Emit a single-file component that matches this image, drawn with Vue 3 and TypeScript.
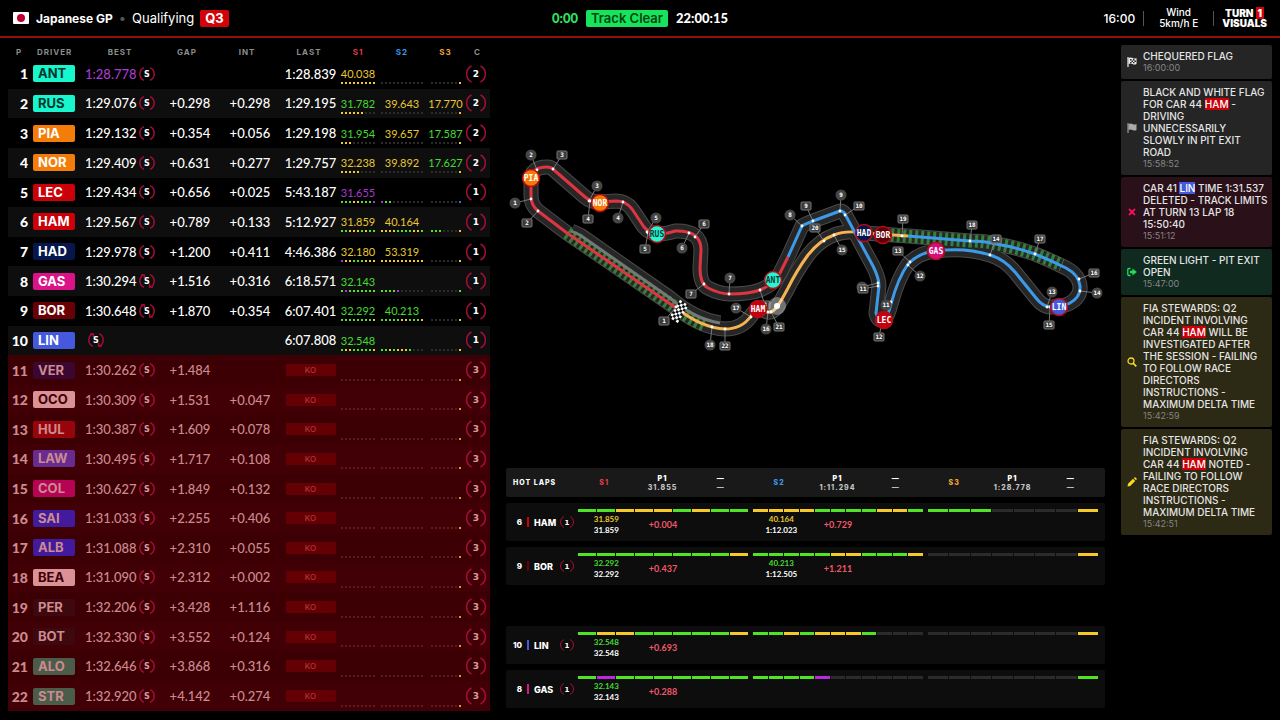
<script setup lang="ts">
type Tyre = 'new' | 'used'
interface Row {
  pos: number
  code: string
  team: string
  best: string
  tyre: Tyre
  gap: string
  int: string
  last: string
  sectors: [string, string][]
  dots: [string, string, string]
  runs: number
  out: boolean
}

const N9 = '---------'
const N11 = '-----------'
const Y3 = '-------y'

function live(pos: number, code: string, team: string, best: string, tyre: Tyre, gap: string, int: string, last: string,
  sectors: [string, string][], dots: [string, string, string], runs: number): Row {
  return { pos, code, team, best, tyre, gap, int, last, sectors, dots, runs, out: false }
}
function knocked(pos: number, code: string, team: string, best: string, gap: string, int: string): Row {
  return { pos, code, team, best, tyre: 'new', gap, int, last: '', sectors: [['', ''], ['', ''], ['', '']], dots: [N9, N11, Y3], runs: 3, out: true }
}

const none: [string, string] = ['', '']
const rows: Row[] = [
  live(1, 'ANT', 'mercedes', '1:28.778', 'new', '', '', '1:28.839', [['40.038', 'y'], none, none], ['yyyyyyyyy', N11, Y3], 2),
  live(2, 'RUS', 'mercedes', '1:29.076', 'new', '+0.298', '+0.298', '1:29.195', [['31.782', 'g'], ['39.643', 'y'], ['17.770', 'y']], ['yyyyyy---', N11, Y3], 2),
  live(3, 'PIA', 'mclaren', '1:29.132', 'new', '+0.354', '+0.056', '1:29.198', [['31.954', 'g'], ['39.657', 'y'], ['17.587', 'g']], ['yyy------', N11, Y3], 2),
  live(4, 'NOR', 'mclaren', '1:29.409', 'new', '+0.631', '+0.277', '1:29.757', [['32.238', 'y'], ['39.892', 'y'], ['17.627', 'g']], ['yyyyy----', N11, Y3], 2),
  live(5, 'LEC', 'ferrari', '1:29.434', 'new', '+0.656', '+0.025', '5:43.187', [['31.655', 'p'], none, none], ['gggyygggp', 'pgg--------', '-------b'], 1),
  live(6, 'HAM', 'ferrari', '1:29.567', 'new', '+0.789', '+0.133', '5:12.927', [['31.859', 'y'], ['40.164', 'y'], none], ['ggyyygygg', 'yyyyggggyyg', 'ggg----y'], 1),
  live(7, 'HAD', 'redbull', '1:29.978', 'new', '+1.200', '+0.411', '4:46.386', [['32.180', 'y'], ['53.319', 'y'], none], ['pyygggyyy', 'yyyyyyyyyyy', Y3], 1),
  live(8, 'GAS', 'alpine', '1:30.294', 'used', '+1.516', '+0.316', '6:18.571', [['32.143', 'g'], none, none], ['gpggggggg', 'ggggp------', '-------g'], 1),
  live(9, 'BOR', 'audi', '1:30.648', 'used', '+1.870', '+0.354', '6:07.401', [['32.292', 'g'], ['40.213', 'g'], none], ['ggggggggy', 'gggggyygggy', Y3], 1),
  live(10, 'LIN', 'racingbulls', '', 'used', '', '', '6:07.808', [['32.548', 'g'], none, none], ['gyygggggy', 'ggygyyyg---', Y3], 1),
  knocked(11, 'VER', 'redbull-ko', '1:30.262', '+1.484', ''),
  knocked(12, 'OCO', 'haas', '1:30.309', '+1.531', '+0.047'),
  knocked(13, 'HUL', 'audi-ko', '1:30.387', '+1.609', '+0.078'),
  knocked(14, 'LAW', 'rb-ko', '1:30.495', '+1.717', '+0.108'),
  knocked(15, 'COL', 'alpine-ko', '1:30.627', '+1.849', '+0.132'),
  knocked(16, 'SAI', 'williams', '1:31.033', '+2.255', '+0.406'),
  knocked(17, 'ALB', 'williams', '1:31.088', '+2.310', '+0.055'),
  knocked(18, 'BEA', 'haas', '1:31.090', '+2.312', '+0.002'),
  knocked(19, 'PER', 'cadillac', '1:32.206', '+3.428', '+1.116'),
  knocked(20, 'BOT', 'cadillac', '1:32.330', '+3.552', '+0.124'),
  knocked(21, 'ALO', 'aston', '1:32.646', '+3.868', '+0.316'),
  knocked(22, 'STR', 'aston', '1:32.920', '+4.142', '+0.274'),
]

const hotHead = [
  { name: 'S1', cls: 's1', time: '31.855' },
  { name: 'S2', cls: 's2', time: '1:11.294' },
  { name: 'S3', cls: 's3', time: '1:28.778' },
]
interface HotBlock { bars: string; time: string; tone: string; total: string; delta: string }
interface HotRow { pos: number; code: string; bar: string; blocks: HotBlock[] }
const blank = (bars: string): HotBlock => ({ bars, time: '', tone: '', total: '', delta: '' })
const hotGroups: HotRow[][] = [
  [
    { pos: 6, code: 'HAM', bar: 'ferrari', blocks: [
      { bars: 'ggyyygygg', time: '31.859', tone: 'y', total: '31.859', delta: '+0.004' },
      { bars: 'yyyyggggyyg', time: '40.164', tone: 'y', total: '1:12.023', delta: '+0.729' },
      blank('ggg----y')] },
    { pos: 9, code: 'BOR', bar: 'audi', blocks: [
      { bars: 'ggggggggy', time: '32.292', tone: 'g', total: '32.292', delta: '+0.437' },
      { bars: 'gggggyygggy', time: '40.213', tone: 'g', total: '1:12.505', delta: '+1.211' },
      blank(Y3)] },
  ],
  [
    { pos: 10, code: 'LIN', bar: 'racingbulls', blocks: [
      { bars: 'gyygggggy', time: '32.548', tone: 'g', total: '32.548', delta: '+0.693' },
      blank('ggygyyyg---'), blank(Y3)] },
    { pos: 8, code: 'GAS', bar: 'alpine', blocks: [
      { bars: 'gpggggggg', time: '32.143', tone: 'g', total: '32.143', delta: '+0.288' },
      blank('ggggp------'), blank('-------g')] },
  ],
]

interface Part { t: string; c?: string }
interface Message { kind: string; icon: string; lines: Part[][]; time: string }
const l = (t: string): Part[] => [{ t }]
const messages: Message[] = [
  { kind: 'grey', icon: 'chequered', lines: [l('CHEQUERED FLAG')], time: '16:00:00' },
  { kind: 'grey', icon: 'flag', lines: [l('BLACK AND WHITE FLAG'), [{ t: 'FOR CAR 44 ' }, { t: 'HAM', c: 'ferrari' }, { t: ' -' }], l('DRIVING'), l('UNNECESSARILY'), l('SLOWLY IN PIT EXIT'), l('ROAD')], time: '15:58:52' },
  { kind: 'crimson', icon: 'cross', lines: [[{ t: 'CAR 41 ' }, { t: 'LIN', c: 'racingbulls' }, { t: ' TIME 1:31.537' }], l('DELETED - TRACK LIMITS'), l('AT TURN 13 LAP 18'), l('15:50:40')], time: '15:51:12' },
  { kind: 'green', icon: 'exit', lines: [l('GREEN LIGHT - PIT EXIT'), l('OPEN')], time: '15:47:00' },
  { kind: 'olive', icon: 'search', lines: [l('FIA STEWARDS: Q2'), l('INCIDENT INVOLVING'), [{ t: 'CAR 44 ' }, { t: 'HAM', c: 'ferrari' }, { t: ' WILL BE' }], l('INVESTIGATED AFTER'), l('THE SESSION - FAILING'), l('TO FOLLOW RACE'), l('DIRECTORS'), l('INSTRUCTIONS -'), l('MAXIMUM DELTA TIME')], time: '15:42:59' },
  { kind: 'olive', icon: 'pencil', lines: [l('FIA STEWARDS: Q2'), l('INCIDENT INVOLVING'), [{ t: 'CAR 44 ' }, { t: 'HAM', c: 'ferrari' }, { t: ' NOTED -' }], l('FAILING TO FOLLOW'), l('RACE DIRECTORS'), l('INSTRUCTIONS -'), l('MAXIMUM DELTA TIME')], time: '15:42:51' },
]

const redLine = 'M679 310 L567 233 L538 211 Q531 205 531 196 L531 180 Q531 167 547 167 Q551 167 554 170 L585 197 Q591 202 600 202 L616 201 Q626 201 632 209 L644 227 Q649 233 657 234 Q667 234 675 231 Q701 230 701 250 L700 268 Q700 284 708 288 Q720 294 730 294 Q749 294 760 290 Q775 284 780 273 L788 257'
const blueLine = 'M788 257 L802 226 Q803 225 813 221 L840 211 Q844 211 846 216 L873 266 Q879 278 879 286 L876 313 Q878 322 884 320 Q888 316 891 304 Q898 278 908 264 Q920 252 936 251 Q965 247 990 255 Q1004 259 1015 272 L1036 298 Q1043 307 1051 307 Q1063 307 1070 303 Q1081 297 1080 286 Q1079 275 1066 268 Q1050 260 1035 254 Q1015 247 996 244 Q985 241 970 241 L908 236'
const amberLine = 'M908 236 L864 233 Q846 230 834 235 Q820 240 808 255 Q797 270 788 288 Q779 305 776 308 Q772 313 767 312 Q757 306 751 316 Q742 329 725 329 Q703 328 679 310'
const pitLine = 'M571 231 L580 235 L670 298 Q694 319 720 323'
const straightZone = 'M567 233 L679 310 Q690 319 704 325'
const backZone = 'M891 235 L970 241 Q985 241 996 244 Q1015 247 1035 254 Q1050 260 1062 265'

// kind, label, x, y, point on the track
type Pin = ['c' | 's', string, number, number, number, number]
const pins: Pin[] = [
  ['c', '1', 515, 203, 531, 199], ['c', '2', 531, 155, 537, 170], ['c', '3', 597, 186, 589, 201],
  ['c', '4', 618, 218, 623, 202], ['c', '5', 656, 218, 647, 232], ['c', '6', 682, 248, 689, 233],
  ['c', '7', 730, 278, 729, 294], ['c', '8', 790, 215, 802, 226], ['c', '9', 841, 195, 840, 211],
  ['c', '15', 842, 250, 834, 235], ['c', '17', 736, 308, 751, 317], ['c', '16', 766, 329, 768, 312],
  ['c', '18', 710, 345, 712, 327], ['c', '10', 862, 287, 878, 283], ['c', '12', 920, 276, 908, 265],
  ['c', '11', 886, 305, 891, 302], ['c', '13', 1052, 292, 1047, 307], ['c', '14', 1097, 293, 1080, 291],
  ['s', '2', 527, 223, 538, 211], ['s', '3', 562, 155, 553, 169], ['s', '4', 588, 219, 590, 201],
  ['s', '5', 645, 249, 648, 233], ['s', '6', 704, 224, 695, 237], ['s', '7', 691, 294, 704, 284],
  ['s', '1', 664, 321, 676, 307], ['s', '8', 765, 305, 760, 290], ['s', '9', 806, 206, 813, 221],
  ['s', '10', 859, 206, 845, 215], ['s', '20', 815, 228, 824, 241], ['s', '21', 779, 327, 771, 312],
  ['s', '22', 725, 346, 725, 329], ['s', '11', 863, 289, 878, 286], ['s', '12', 879, 337, 882, 322],
  ['s', '13', 898, 251, 910, 262], ['s', '14', 996, 239, 990, 255], ['s', '15', 1049, 325, 1050, 307],
  ['s', '16', 1094, 273, 1079, 279], ['s', '17', 1040, 239, 1035, 254], ['s', '18', 972, 225, 970, 241],
  ['s', '19', 903, 219, 902, 236],
]
const cars: [string, number, number, string, string][] = [
  ['PIA', 531, 178, '#f47a08', '#fff'], ['NOR', 600, 203, '#f47a08', '#fff'], ['RUS', 657, 234, '#27f4d2', '#0a3a34'],
  ['ANT', 773, 280, '#27f4d2', '#0a3a34'], ['HAM', 758, 309, '#c40010', '#fff'], ['BOR', 883, 235, '#5c0008', '#fff'],
  ['HAD', 864, 233, '#07154f', '#fff'], ['GAS', 936, 251, '#d3107f', '#fff'], ['LEC', 884, 320, '#c40010', '#fff'],
  ['LIN', 1059, 307, '#4459dd', '#fff'],
]
const flagCells = Array.from({ length: 32 }, (_, i) => ({ x: i % 4, y: Math.floor(i / 4) })).filter(c => (c.x + c.y) % 2 === 0)
</script>

<template>
  <div class="app">
    <header class="top">
      <div class="side">
        <svg class="jp" viewBox="0 0 16 12" aria-hidden="true"><rect width="16" height="12" rx="1" fill="#fff" /><circle cx="8" cy="6" r="4" fill="#bc002d" /></svg>
        <strong>Japanese GP</strong><span class="sep">•</span><span>Qualifying</span><span class="q">Q3</span>
      </div>
      <div class="mid"><span class="count num">0:00</span><span class="clear">Track Clear</span><span class="clock num">22:00:15</span></div>
      <div class="side end">
        <span class="local">16:00</span><i class="rule"></i><span class="wind">Wind<br>5km/h E</span><i class="rule"></i>
        <strong class="brand">TURN <b>1</b><br>VISUALS</strong>
      </div>
    </header>

    <main class="main">
      <table class="tower num">
        <colgroup>
          <col class="w-p"><col class="w-d"><col class="w-b"><col class="w-g"><col class="w-g"><col class="w-l"><col class="w-1"><col class="w-2"><col class="w-3"><col class="w-c">
        </colgroup>
        <thead>
          <tr><th>P</th><th class="left">DRIVER</th><th>BEST</th><th class="mid-left">GAP</th><th class="mid-left">INT</th><th>LAST</th><th class="s1">S1</th><th class="s2">S2</th><th class="s3">S3</th><th>C</th></tr>
        </thead>
        <tbody>
          <tr v-for="r in rows" :key="r.pos" :class="{ out: r.out }">
            <td class="pos">{{ r.pos }}</td>
            <td class="driver"><span class="badge" :class="r.team">{{ r.code }}</span></td>
            <td>
              <div class="best" :class="{ untimed: !r.best }">
                <span v-if="r.best" :class="{ p: r.pos === 1 }">{{ r.best }}</span>
                <svg class="tyre" viewBox="0 0 16 16" role="img" aria-label="Soft">
                  <path d="M5 1.6A7 7 0 0 0 5 14.4M11 1.6A7 7 0 0 1 11 14.4" />
                  <path v-if="r.tyre === 'used'" d="M2 2h3.4v3M14 14h-3.4v-3" />
                  <text x="8" y="11">S</text>
                </svg>
              </div>
            </td>
            <td>{{ r.gap }}</td>
            <td>{{ r.int }}</td>
            <td class="last"><span v-if="r.out" class="ko">KO</span><template v-else>{{ r.last }}</template></td>
            <td v-for="(s, i) in r.sectors" :key="i" class="sector">
              <div class="sec">
                <span :class="s[1]">{{ s[0] }}</span>
                <div class="dots"><i v-for="(d, k) in r.dots[i]" :key="k" :class="d === '-' ? 'off' : d"></i></div>
              </div>
            </td>
            <td class="runs">
              <svg class="ring" viewBox="0 0 20 20"><path d="M5.5 2A9 9 0 0 0 5.5 18M14.5 2A9 9 0 0 1 14.5 18" /><text x="10" y="13.4">{{ r.runs }}</text></svg>
            </td>
          </tr>
        </tbody>
      </table>

      <section class="center">
        <svg class="map" viewBox="506 45 599 415" role="img" aria-label="Track map">
          <g class="edge"><path :d="pitLine" /><path :d="amberLine" /><path :d="blueLine" /><path :d="redLine" /></g>
          <g class="road"><path :d="pitLine" /><path :d="amberLine" /><path :d="blueLine" /><path :d="redLine" /></g>
          <path class="zone" :d="straightZone" />
          <path class="zone" :d="backZone" />
          <path class="pit" :d="pitLine" />
          <path class="line" stroke="#f6b352" :d="amberLine" />
          <path class="line" stroke="#3c9ae8" :d="blueLine" />
          <path class="line" stroke="#df3543" :d="redLine" />
          <g transform="translate(679 311) rotate(32) translate(-5 -10)">
            <rect width="10" height="21" fill="#111" />
            <rect v-for="(c, i) in flagCells" :key="i" :x="c.x * 2.6" :y="c.y * 2.6" width="2.6" height="2.6" fill="#fff" />
          </g>
          <g v-for="(p, i) in pins" :key="i" class="pin">
            <line :x1="p[2]" :y1="p[3]" :x2="p[4]" :y2="p[5]" />
            <circle class="spot" :cx="p[4]" :cy="p[5]" r="1.4" />
            <circle v-if="p[0] === 'c'" class="tag" :cx="p[2]" :cy="p[3]" r="5.5" />
            <rect v-else class="box" :x="p[2] - 5" :y="p[3] - 4" width="10" height="8" rx="1" />
            <text :x="p[2]" :y="p[3] + 2">{{ p[1] }}</text>
          </g>
          <circle cx="777" cy="306" r="9" fill="#fff" opacity=".35" />
          <circle cx="777" cy="306" r="3" fill="#fff" />
          <g v-for="c in cars" :key="c[0]" class="car">
            <circle :cx="c[1]" :cy="c[2]" r="8.5" :fill="c[3]" />
            <text :x="c[1]" :y="c[2] + 3" :fill="c[4]">{{ c[0] }}</text>
          </g>
        </svg>

        <div class="hot">
          <div class="hot-head">
            <span class="title">HOT LAPS</span>
            <div v-for="h in hotHead" :key="h.name" class="hcell">
              <span :class="h.cls">{{ h.name }}</span>
              <span class="ref"><b>P1</b><em>{{ h.time }}</em></span>
              <span class="ref"><b>—</b><em>—</em></span>
            </div>
          </div>
          <div v-for="(g, gi) in hotGroups" :key="gi" class="hot-group">
            <div v-for="r in g" :key="r.pos" class="hot-row">
              <div class="who">
                <span class="hpos">{{ r.pos }}</span><i class="stripe" :class="r.bar"></i><span class="code">{{ r.code }}</span>
                <svg class="mini" viewBox="0 0 14 14"><path d="M4 1.5A6 6 0 0 0 4 12.5M10 1.5A6 6 0 0 1 10 12.5" /><text x="7" y="9.6">1</text></svg>
              </div>
              <div v-for="(b, bi) in r.blocks" :key="bi" class="block">
                <div class="bars"><i v-for="(d, k) in b.bars" :key="k" :class="d === '-' ? 'off' : d"></i></div>
                <div class="vals num">
                  <span class="times"><span :class="b.tone">{{ b.time }}</span><span>{{ b.total }}</span></span>
                  <span class="delta">{{ b.delta }}</span>
                </div>
              </div>
            </div>
          </div>
        </div>
      </section>

      <aside class="feed">
        <article v-for="(m, i) in messages" :key="i" class="card" :class="m.kind">
          <svg v-if="m.icon === 'chequered'" class="ico" viewBox="0 0 10 10"><path d="M1 0v10" stroke="#eee" stroke-width="1.2" /><path d="M1.5 1Q4 0 5.5 1T9.500 1V7Q7.500 8 5.500 7T1.500 7Z" fill="#eee" /><path d="M3 2h1.500v1.500H3zM6 2h1.500v1.500H6zM4.500 3.500H6V5H4.500zM7.500 3.500H9V5H7.500zM3 5h1.500v1.300H3zM6 5h1.500v1.300H6z" fill="#222" /></svg>
          <svg v-else-if="m.icon === 'flag'" class="ico" viewBox="0 0 10 10"><path d="M1 0v10" stroke="#999" stroke-width="1.2" /><path d="M1.5 1Q4 0 5.5 1T9.500 1V7Q7.500 8 5.500 7T1.500 7Z" fill="#aaa" /></svg>
          <svg v-else-if="m.icon === 'cross'" class="ico" viewBox="0 0 10 10"><path d="M2 2l6 6M8 2l-6 6" stroke="#f0145a" stroke-width="1.8" /></svg>
          <svg v-else-if="m.icon === 'exit'" class="ico" viewBox="0 0 10 10"><path d="M3.5 1.5H2Q.8 1.5 .8 2.7V7.3Q.8 8.5 2 8.5H3.5" fill="none" stroke="#1fe05a" stroke-width="1.3" /><path d="M3 3.8H5.5V1.5L9.8 5L5.5 8.5V6.2H3Z" fill="#1fe05a" /></svg>
          <svg v-else-if="m.icon === 'search'" class="ico" viewBox="0 0 10 10"><circle cx="4" cy="4" r="3" fill="none" stroke="#f5dc1c" stroke-width="1.3" /><path d="M6.3 6.3L9.3 9.3" stroke="#f5dc1c" stroke-width="1.7" /></svg>
          <svg v-else class="ico" viewBox="0 0 10 10"><path d="M.5 9.5L1 6.8L6 1.8L8.2 4L3.2 9Z M6.7 1.1L7.5 .4Q8 0 8.5 .4L9.6 1.5Q10 2 9.6 2.5L8.9 3.3Z" fill="#f5dc1c" /></svg>
          <div class="body">
            <p v-for="(ln, k) in m.lines" :key="k"><span v-for="(pt, j) in ln" :key="j" :class="pt.c ? ['hl', pt.c] : ''">{{ pt.t }}</span></p>
            <time>{{ m.time }}</time>
          </div>
        </article>
      </aside>
    </main>
  </div>
</template>

<style>
body { background: #000; }
</style>

<style scoped>
* { box-sizing: border-box; }
.app { min-height: 100vh; display: flex; flex-direction: column; background: #000; color: #fff; font-family: Inter, "Liberation Sans", sans-serif; font-size: 13px; }
.num { font-family: Lato, "Liberation Sans", sans-serif; }
.top { display: grid; grid-template-columns: 1fr auto 1fr; align-items: center; height: 38px; padding: 0 13px; border-bottom: 2px solid #92100c; }
.side, .mid { display: flex; align-items: center; }
.side strong { font-weight: 700; font-size: 12px; }
.jp { width: 16px; height: 12px; margin-right: 7px; }
.sep { color: #555; margin: 0 6px; }
.q { background: #d2040a; font-weight: 700; border-radius: 2px; margin-left: 6px; padding: 0 5px; line-height: 17px; }
.mid { gap: 8px; font-weight: 700; }
.mid .num { font-size: 13px; font-weight: 900; }
.count { color: #2fe562; }
.clear { background: #17e45c; color: #04450f; border-radius: 2px; padding: 0 5px; line-height: 17px; font-weight: 600; }
.end { justify-content: flex-end; }
.local { font-size: 12px; font-weight: 500; }
.rule { width: 1px; height: 15px; background: #555; margin: 0 8px; }
.wind { font-size: 10px; line-height: 11px; text-align: center; font-weight: 500; padding: 0 7px; }
.side .brand { font-size: 10px; line-height: 10px; font-weight: 900; text-align: center; }
.brand b { background: #d2040a; padding: 0 2px; }

.main { flex: 1; display: grid; grid-template-columns: minmax(0, 482fr) minmax(0, 599fr) minmax(0, 151fr); gap: 16px; padding: 7px 8px 8px; align-items: start; }

.tower { width: 100%; height: calc(100vh - 54px); border-collapse: collapse; table-layout: fixed; font-weight: 500; font-size: 13px; }
.tower th, .tower td { padding: 0; text-align: center; vertical-align: middle; }
.tower th { height: 14px; font: 700 8px/14px Inter, sans-serif; letter-spacing: 1px; color: #8c8c8c; }
.tower th.left { text-align: left; padding-left: 7px; }
.tower th.mid-left { padding-right: 6px; }
.w-p { width: 22px; } .w-d { width: 50px; } .w-b { width: 80px; } .w-g { width: 60px; } .w-l { width: 58px; }
.w-1 { width: 40px; } .w-2 { width: 48px; } .w-3 { width: 39px; } .w-c { width: 25px; }
.tower tbody tr:nth-child(even) { background: #0e0e0e; }
.tower tbody tr.out { background: #3c0004; color: #cd8b8f; }
.tower tbody tr.out:nth-child(even) { background: #410006; }
.tower td.pos { text-align: right; padding-right: 2px; font-weight: 900; font-size: 14px; }
.tower td.driver { text-align: left; padding-left: 3px; }
.tower td.last { padding-left: 3px; }
.tower td.runs { padding-right: 1px; }
.badge { display: block; width: 42px; padding-left: 5px; border-radius: 2px; font: 700 13px/17px Inter, sans-serif; }
.best { display: flex; align-items: center; gap: 2px; padding-left: 5px; }
.best.untimed { padding-left: 8px; }
.tyre { width: 16px; height: 16px; }
.tyre path, .ring path, .mini path { fill: none; stroke: #a60d38; stroke-width: 1.5; }
.tyre text, .ring text, .mini text { fill: #fff; text-anchor: middle; font: 700 8px "DejaVu Sans", sans-serif; }
.ring { width: 20px; height: 20px; display: block; margin-left: 1px; }
.ring text { font-size: 9px; }
.mini text { font-size: 7px; }
.out .tyre text, .out .ring text { fill: #dc9a9e; }
.ko { display: block; width: 50px; margin: 0 auto; background: #640003; color: #b23539; font: 500 8px/12px Inter, sans-serif; border-radius: 1px; }
.sec { display: flex; flex-direction: column; align-items: center; font-size: 11px; font-weight: 400; line-height: 15px; padding-top: 5px; }
.sec span { height: 15px; }
.dots { display: flex; gap: 2px; height: 2px; margin-top: 1px; margin-bottom: 2px; }
.dots i { width: 2px; height: 2px; }
.sec span.p, .p { color: #a83bd0; }
.y { color: #e9c832; } .g { color: #44dc34; }
i.y { background: #f4c928; } i.g { background: #50e424; } i.p { background: #bd27e2; } i.b { background: #2c72d8; } i.off { background: #2b2b2b; }
.out i.off { background: #5a1c20; } .out i.y { background: #e0993a; }
.tower .s1, .s1 { color: #e03c42; } .tower .s2, .s2 { color: #3c96e8; } .tower .s3, .s3 { color: #f0a63c; }

.mercedes { background: #17f6cc; color: #04382f; }
.mclaren { background: #f47d0a; }
.ferrari { background: #cc0008; }
.redbull { background: #07164c; }
.alpine { background: #dc1289; }
.audi { background: #690006; }
.racingbulls { background: #4459dd; }
.redbull-ko { background: #3b0630; }
.haas { background: #db9296; color: #400006; }
.audi-ko { background: #98040b; }
.rb-ko { background: #682b90; }
.alpine-ko { background: #b50454; }
.williams { background: #421a9e; }
.cadillac { background: #3e080f; }
.aston { background: #4c5c4b; }

.center { display: flex; flex-direction: column; }
.map { width: 100%; height: auto; display: block; }
.map path { fill: none; stroke-linejoin: round; }
.edge path { stroke: #4a4a4a; stroke-width: 15; }
.road path { stroke: #262626; stroke-width: 13; }
.map .zone { stroke: #34803a; stroke-width: 13; stroke-dasharray: 3 3; }
.map .pit { stroke: #727a75; stroke-width: 3; }
.map .line { stroke-width: 3; }
.pin line { stroke: #777; stroke-width: 1; }
.spot { fill: #fff; }
.tag { fill: #454545; }
.box { fill: #3b3b3b; stroke: #777; stroke-width: 1; }
.pin text { fill: #fff; font: 700 6px "DejaVu Sans Mono", monospace; text-anchor: middle; }
.car circle { stroke: #b30b12; stroke-width: 1.5; }
.car text { font: 700 8px "DejaVu Sans Mono", monospace; text-anchor: middle; }

.hot { margin-top: 8px; display: flex; flex-direction: column; }
.hot-head, .hot-row { display: grid; grid-template-columns: 69px repeat(3, minmax(0, 1fr)); padding-right: 5px; border-radius: 2px; }
.hot-head { height: 29px; align-items: center; background: #191919; font-size: 7px; font-weight: 800; letter-spacing: 1px; margin-bottom: 6px; }
.title { padding-left: 7px; white-space: nowrap; }
.hcell { display: grid; grid-template-columns: repeat(3, 1fr); align-items: center; text-align: center; }
.ref { display: flex; flex-direction: column; line-height: 9px; }
.ref em { font-style: normal; color: #c4c4c4; }
.hot-group { display: flex; flex-direction: column; gap: 6px; margin-bottom: 41px; }
.hot-group:last-child { margin-bottom: 0; }
.hot-row { height: 38px; background: #0d0d0d; }
.who { display: flex; align-items: center; }
.hpos { width: 16px; text-align: right; font-size: 8px; font-weight: 800; }
.stripe { width: 2px; height: 10px; margin: 0 5px 0 5px; }
.code { font-size: 9px; font-weight: 800; width: 26px; }
.mini { width: 14px; height: 14px; flex: none; }
.mini path { stroke-width: 1; }
.block { padding: 6px 2px 0 3px; }
.bars { display: flex; gap: 1px; height: 3px; }
.bars i { flex: 1; }
.vals { display: grid; grid-template-columns: repeat(3, 1fr); align-items: center; text-align: center; font-size: 9px; font-weight: 700; }
.times { display: flex; flex-direction: column; font-size: 8px; line-height: 11px; height: 22px; margin-top: 2px; }
.delta { color: #ee5868; font-weight: 700; }

.feed { display: flex; flex-direction: column; gap: 2px; }
.card { display: flex; align-items: center; gap: 6px; padding: 5px 3px 5px 6px; border-radius: 2px; }
.grey { background: #252525; } .crimson { background: #2a1018; } .green { background: #102a20; } .olive { background: #2c2914; }
.ico { width: 10px; height: 10px; flex: none; }
.body { font-size: 10px; line-height: 12px; font-weight: 500; color: #e4e4e4; white-space: pre; }
.body p { margin: 0; }
.body time { display: block; color: #858585; font-size: 9px; font-weight: 400; }
.hl { color: #fff; }
</style>
